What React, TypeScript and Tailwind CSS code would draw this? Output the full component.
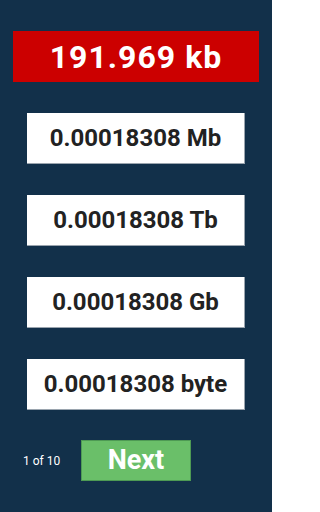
import React from "react";

const rows = ["0.00018308 Mb", "0.00018308 Tb", "0.00018308 Gb", "0.00018308 byte"];

export default function App() {
  return (
    <div
      className="w-[272px] h-[512px] bg-[#12304a] flex flex-col items-center pt-[31px]"
      style={{ fontFamily: "Roboto, 'Liberation Sans', sans-serif" }}
    >
      <div className="w-[246px] h-[51px] bg-[#cc0000] flex items-center justify-center">
        <span className="text-white font-bold text-[32px] tracking-[1px] leading-none">191.969 kb</span>
      </div>
      <div className="flex flex-col gap-[31px] mt-[31px]">
        {rows.map((r) => (
          <div
            key={r}
            className="w-[218px] h-[51px] bg-white flex items-center justify-center border-b border-r border-[#9aa4ae]"
          >
            <span className="text-[#222222] font-bold text-[24px] leading-none">{r}</span>
          </div>
        ))}
      </div>
      <div className="w-full flex items-center mt-[30px]">
        <span className="text-white text-[12px] ml-[23px] w-[58px]">1 of 10</span>
        <div className="w-[110px] h-[41px] bg-[#6abf69] border border-[#4e9a54] flex items-center justify-center">
          <span className="text-white font-bold text-[27px] leading-none">Next</span>
        </div>
      </div>
    </div>
  );
}
